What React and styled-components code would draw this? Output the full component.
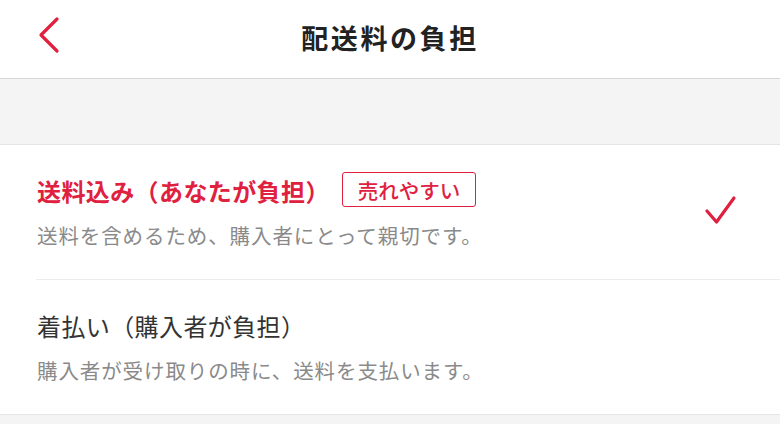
import React from "react";
import styled, { createGlobalStyle } from "styled-components";

const RED = "#e0203f";

const GlobalStyle = createGlobalStyle`
  body {
    margin: 0;
    background: #f4f4f4;
    font-family: "Noto Sans CJK JP", "Noto Sans", sans-serif;
  }
`;

const options = [
  {
    title: "送料込み（あなたが負担）",
    note: "送料を含めるため、購入者にとって親切です。",
    badge: "売れやすい",
    selected: true,
  },
  {
    title: "着払い（購入者が負担）",
    note: "購入者が受け取りの時に、送料を支払います。",
    selected: false,
  },
];

const App = () => {
  return (
    <Page>
      <GlobalStyle />
      <Header>
        <BackButton aria-label="戻る">
          <svg width="24" height="38" viewBox="0 0 24 38">
            <path d="M20 3 L4 19 L20 35" fill="none" stroke={RED} strokeWidth="3.2" strokeLinecap="round" strokeLinejoin="round" />
          </svg>
        </BackButton>
        <Title>配送料の負担</Title>
        <span />
      </Header>
      <Spacer />
      <List>
        {options.map((item, i) => (
          <Option key={i}>
            <OptionInner last={i === options.length - 1}>
              <div>
                <OptionTitleRow>
                  <OptionTitle selected={item.selected}>{item.title}</OptionTitle>
                  {item.badge && <Badge>{item.badge}</Badge>}
                </OptionTitleRow>
                <OptionNote>{item.note}</OptionNote>
              </div>
              {item.selected && (
                <Check width="34" height="32" viewBox="0 0 34 32">
                  <path d="M3 16 L12.5 27 L30 3" fill="none" stroke={RED} strokeWidth="3.2" strokeLinecap="round" strokeLinejoin="round" />
                </Check>
              )}
            </OptionInner>
          </Option>
        ))}
      </List>
    </Page>
  );
};

export default App;

const Page = styled.div`
  width: 780px;
`;

const Header = styled.header`
  height: 78px;
  background: #fff;
  border-bottom: 1px solid #d6d6d6;
  display: grid;
  grid-template-columns: 1fr auto 1fr;
  align-items: center;
`;

const BackButton = styled.button`
  border: none;
  background: none;
  padding: 0 0 0 37px;
  display: flex;
  align-items: center;
  justify-self: start;
  margin-top: -8px;
  cursor: pointer;
`;

const Title = styled.h1`
  margin: 0;
  font-size: 27px;
  font-weight: 700;
  letter-spacing: 2.6px;
  color: #222;
  margin-top: -4px;
`;

const Spacer = styled.div`
  height: 65px;
  background: #f4f4f4;
  border-bottom: 1px solid #e4e4e4;
`;

const List = styled.div`
  background: #fff;
  border-bottom: 1px solid #e6e6e6;
`;

const Option = styled.div`
  padding-left: 36px;
`;

const OptionInner = styled.div`
  height: 134px;
  display: flex;
  align-items: center;
  justify-content: space-between;
  padding: 0 42px 0 1px;
  border-bottom: ${(p) => (p.last ? "none" : "1px solid #ececec")};
`;

const OptionTitleRow = styled.div`
  height: 30px;
  display: flex;
  align-items: center;
`;

const OptionTitle = styled.div`
  font-size: 24px;
  line-height: 30px;
  letter-spacing: 0.4px;
  font-weight: ${(p) => (p.selected ? 700 : 400)};
  color: ${(p) => (p.selected ? RED : "#333")};
`;

const Badge = styled.span`
  margin-left: 12px;
  margin-top: -2px;
  height: 35px;
  box-sizing: border-box;
  padding: 0 15px;
  border: 1.5px solid ${RED};
  border-radius: 3px;
  display: flex;
  align-items: center;
  font-size: 20.5px;
  font-weight: 500;
  color: ${RED};
`;

const OptionNote = styled.div`
  margin-top: 15px;
  font-size: 20.5px;
  line-height: 28px;
  letter-spacing: 0.9px;
  color: #8a8a8a;
`;

const Check = styled.svg`
  display: block;
  margin-top: -2px;
`;
